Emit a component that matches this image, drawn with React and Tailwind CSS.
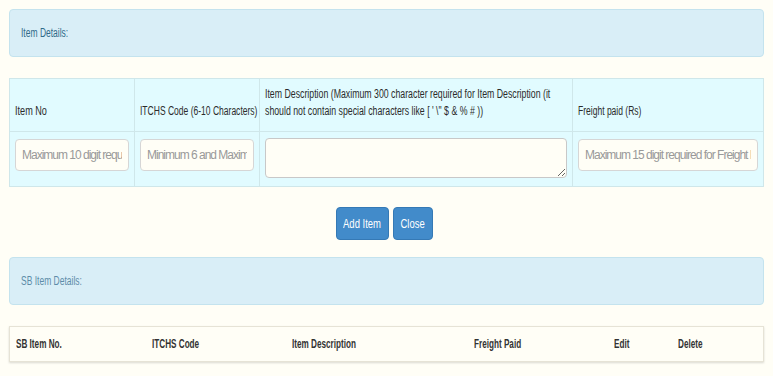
import React from 'react'

const font = { fontFamily: '"Liberation Sans", Arial, sans-serif' }

// narrow text, the page uses a condensed face
function N({ children, className = '', center = false }) {
  return (
    <span className={`inline-block whitespace-nowrap ${center ? 'origin-center' : 'origin-left'} ${className}`}>
      {children}
    </span>
  )
}

const sbCols = [
  { label: 'SB Item No.', w: 'w-[136px]' },
  { label: 'ITCHS Code', w: 'w-[140px]' },
  { label: 'Item Description', w: 'w-[182px]' },
  { label: 'Freight Paid', w: 'w-[140px]' },
  { label: 'Edit', w: 'w-[64px]' },
  { label: 'Delete', w: 'flex-1' },
]

const inputCls =
  'h-[32px] w-full rounded border border-[#d6d6d6] bg-[#fffef6] px-[6px] text-[12px] tracking-[-1px] placeholder:text-[#999] outline-none'

function Panel({ title, light }) {
  return (
    <div className="h-[48px] rounded border border-[#c4e3ee] bg-[#d9eef7] px-[11px] flex items-center">
      <N className={`scale-x-[0.68] text-[12.5px] ${light ? 'text-[#5d8ca8]' : 'text-[#2f6a88]'}`}>{title}</N>
    </div>
  )
}

export default function App() {
  return (
    <div className="min-h-[376px] w-[773px] bg-[#fffef6] px-[9px] pt-[9px] text-[#333]" style={font}>
      <Panel title="Item Details:" />

      {/* Item entry table */}
      <div className="mt-[21px] border border-[#cfe7ea] bg-[#e1fbff]">
        <div className="flex h-[53px] border-b border-[#cfe7ea] text-[12px] leading-[17px] text-[#2b2b2b]">
          <div className="w-[125px] flex items-end px-[5px] pb-[11px] border-r border-[#cfe7ea]">
            <N className="scale-x-[0.76]">Item No</N>
          </div>
          <div className="w-[125px] flex items-end px-[5px] pb-[11px] border-r border-[#cfe7ea]">
            <N className="scale-x-[0.71]">ITCHS Code (6-10 Characters)</N>
          </div>
          <div className="w-[313px] flex items-end px-[5px] pb-[11px] border-r border-[#cfe7ea]">
            <N className="scale-x-[0.73]">
              Item Description (Maximum 300 character required for Item Description (it
              <br />
              should not contain special characters like [ ' \" $ & % # ))
            </N>
          </div>
          <div className="flex-1 flex items-end px-[5px] pb-[11px]">
            <N className="scale-x-[0.71]">Freight paid (Rs)</N>
          </div>
        </div>
        <div className="flex h-[54px]">
          <div className="w-[125px] border-r border-[#cfe7ea] px-[5px] pt-[7px]">
            <input className={inputCls} placeholder="Maximum 10 digit required for Item No" />
          </div>
          <div className="w-[125px] border-r border-[#cfe7ea] px-[5px] pt-[7px]">
            <input className={inputCls} placeholder="Minimum 6 and Maximum 10" />
          </div>
          <div className="w-[313px] border-r border-[#cfe7ea] px-[5px] pt-[6px]">
            <textarea className="block h-[40px] w-full resize-y rounded border border-[#c8c8c8] bg-[#fffef6] outline-none" />
          </div>
          <div className="flex-1 px-[5px] pt-[7px]">
            <input className={inputCls} placeholder="Maximum 15 digit required for Freight Paid" />
          </div>
        </div>
      </div>

      <div className="mt-[20px] flex justify-center gap-[4px] pr-[4px]">
        <button className="flex h-[33px] w-[53px] items-center justify-center rounded border border-[#3579b5] bg-[#428bca] text-[13px] text-white">
          <N center className="scale-x-[0.73]">Add Item</N>
        </button>
        <button className="flex h-[33px] w-[40px] items-center justify-center rounded border border-[#3579b5] bg-[#428bca] text-[13px] text-white">
          <N center className="scale-x-[0.73]">Close</N>
        </button>
      </div>

      <div className="mt-[17px]">
        <Panel title="SB Item Details:" light />
      </div>

      <div className="mt-[21px] flex h-[36px] items-center border border-[#e6e3d6] bg-[#fffef6] px-[6px] pb-[2px] shadow-[0_1px_2px_rgba(0,0,0,0.15)]">
        {sbCols.map((c, i) => (
          <div key={i} className={c.w}>
            <N className="scale-x-[0.68] text-[12px] font-bold text-[#333]">{c.label}</N>
          </div>
        ))}
      </div>
    </div>
  )
}
